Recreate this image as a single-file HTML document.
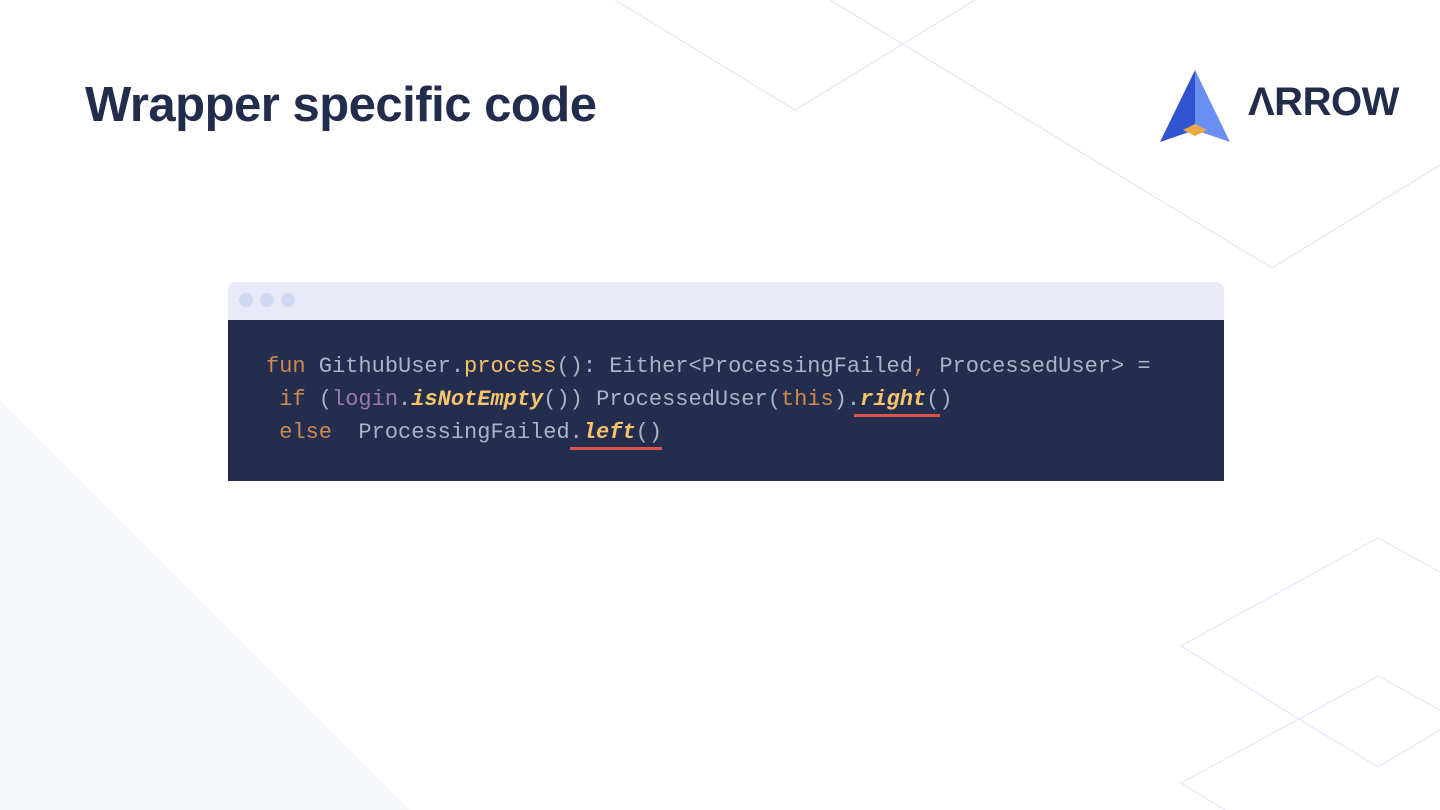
<!DOCTYPE html>
<html><head><meta charset="utf-8"><style>
body{margin:0;width:1440px;height:810px;overflow:hidden;background:#fff;position:relative;font-family:"Liberation Sans",sans-serif}
svg.bg{position:absolute;left:0;top:0}
h1{position:absolute;left:85px;top:77px;margin:0;font-size:49px;font-weight:700;color:#222c4b;letter-spacing:-0.5px}
.win{position:absolute;left:228px;top:282px;width:996px;height:199px}
.bar{height:38px;background:#e8ebf7;border-radius:8px 8px 0 0;position:relative}
.dot{position:absolute;top:11px;width:14px;height:14px;border-radius:50%;background:#d0d9f3}
.code{background:#242d4d;height:161px;box-sizing:border-box;padding:30px 0 0 38px;font-family:"Liberation Mono",monospace;font-size:22px;line-height:33px;color:#aab4c7;white-space:pre}
.k{color:#cc8a4d}.f{color:#f6c46b}.i{font-style:italic;font-weight:700;color:#f6c46b}.p{color:#9a7aa8}
.u{border-bottom:3px solid #e0554a;padding-bottom:2px}
.logo{position:absolute;left:1248px;top:80px;font-size:40px;font-weight:700;color:#222c4b;letter-spacing:-0.5px}
</style></head><body>
<svg class="bg" width="1440" height="810">
<polygon points="0,400 410,810 0,810" fill="#f7f8fc"/>
<g fill="none" stroke="#e4e7f3" stroke-width="1.2">
<polyline points="615,0 795,110 975,0"/>
<polyline points="830,0 1272,268 1440,165"/>
</g>
<g fill="none" stroke="#e3e7fa" stroke-width="1.2">
<polyline points="1440,572 1378,538 1181,646 1299,719 1378,767 1440,730"/>
<polyline points="1440,710 1378,676 1299,719 1181,783 1225,810"/>
</g>
</svg>
<h1>Wrapper specific code</h1>
<svg style="position:absolute;left:1158px;top:68px" width="74" height="76" viewBox="0 0 74 76">
<polygon points="37,2 2,74 37,62" fill="#3153cf"/>
<polygon points="37,2 72,74 37,62" fill="#6a8ff3"/>
<polygon points="25,62 37,56 49,62 37,68" fill="#eba748"/>
</svg>
<div class="logo">ΛRROW</div>
<div class="win">
<div class="bar"><div class="dot" style="left:11px"></div><div class="dot" style="left:32px"></div><div class="dot" style="left:53px"></div></div>
<div class="code"><span class="k">fun</span> GithubUser.<span class="f">process</span>(): Either&lt;ProcessingFailed<span class="k">,</span> ProcessedUser&gt; =
 <span class="k">if</span> (<span class="p">login</span>.<span class="i">isNotEmpty</span>()) ProcessedUser(<span class="k">this</span>).<span class="u" style="margin-left:-6px;padding-left:6px;padding-right:14px;margin-right:-14px"><span class="i">right</span></span>()
 <span class="k">else</span>  ProcessingFailed<span class="u">.<span class="i">left</span>()</span></div>
</div>
</body></html>
